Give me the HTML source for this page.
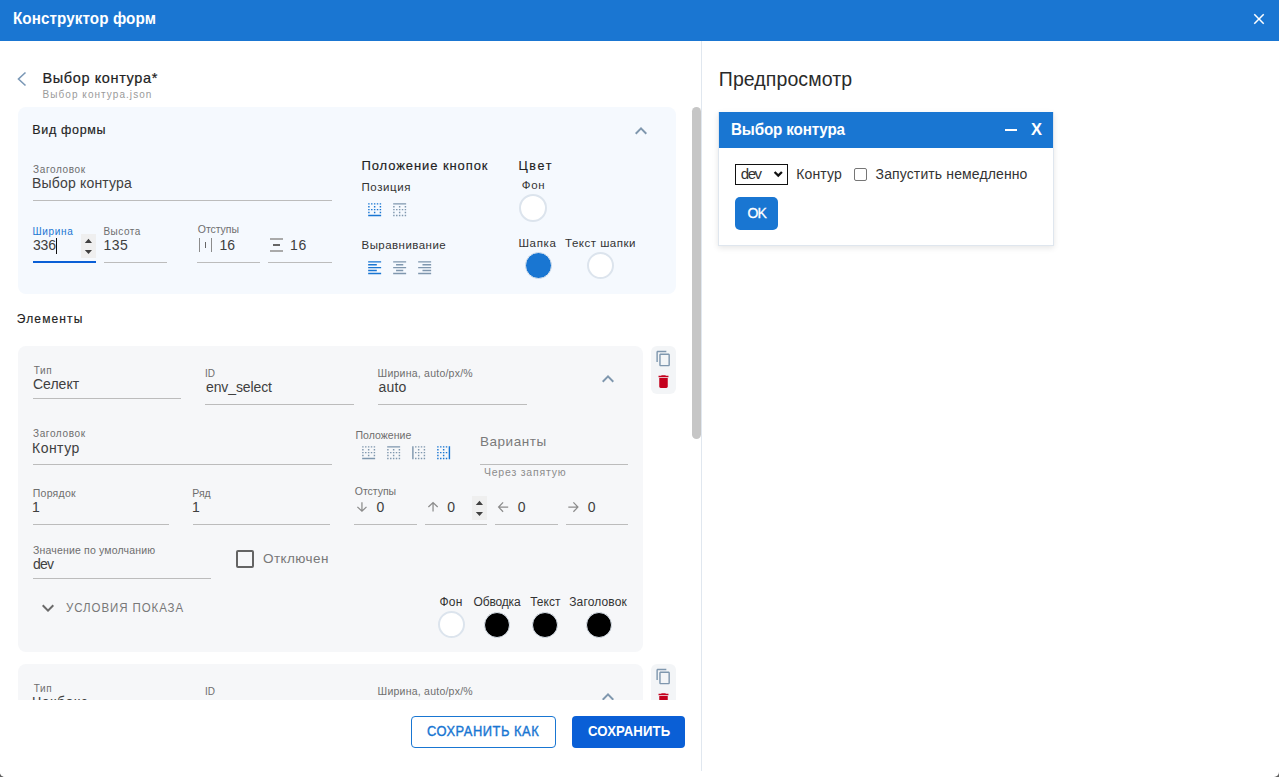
<!DOCTYPE html>
<html><head><meta charset="utf-8"><style>
html,body{margin:0;padding:0;width:1279px;height:777px;overflow:hidden;background:#fff;font-family:"Liberation Sans",sans-serif;}
</style></head><body>
<div id="clipL" style="position:absolute;left:0;top:0;width:1279px;height:777px;">
<div style='position:absolute;left:0px;top:0px;width:1279px;height:777px;background:#5f5f5f'></div>
<div style='position:absolute;left:0px;top:0px;width:1279px;height:777px;background:#fff;border-radius:0 0 5px 5px'></div>
<div style='position:absolute;left:0px;top:0px;width:1279px;height:41px;background:#1a76d2'></div>
<div style='position:absolute;left:701px;top:41px;width:1px;height:730px;background:#e0e7ef'></div>
<div style='position:absolute;left:18px;top:107px;width:658px;height:187px;background:#f5f9fe;border-radius:8px'></div>
<div style='position:absolute;left:18px;top:346px;width:625px;height:306px;background:#f6f7f9;border-radius:8px'></div>
<div style='position:absolute;left:651px;top:346px;width:25px;height:48px;background:#f3f5f7;border-radius:6px'></div>
<div style='position:absolute;left:18px;top:664px;width:625px;height:306px;background:#f6f7f9;border-radius:8px'></div>
<div style='position:absolute;left:651px;top:664px;width:25px;height:48px;background:#f3f5f7;border-radius:6px'></div>
<div style='position:absolute;left:718px;top:112px;width:334px;height:132px;background:#fff;border:1px solid #dfe6ee;box-shadow:0 2px 6px rgba(0,0,0,0.10)'></div>
<div style='position:absolute;left:33px;top:200px;width:299px;height:1px;background:#bcbcbc'></div>
<div style='position:absolute;left:33px;top:261px;width:63px;height:2px;background:#0a5fd6'></div>
<div style='position:absolute;left:104px;top:262px;width:63px;height:1px;background:#bcbcbc'></div>
<div style='position:absolute;left:197px;top:262px;width:63px;height:1px;background:#bcbcbc'></div>
<div style='position:absolute;left:268px;top:262px;width:64px;height:1px;background:#bcbcbc'></div>
<div style='position:absolute;left:33px;top:398px;width:148px;height:1px;background:#bcbcbc'></div>
<div style='position:absolute;left:205px;top:404px;width:149px;height:1px;background:#bcbcbc'></div>
<div style='position:absolute;left:378px;top:404px;width:149px;height:1px;background:#bcbcbc'></div>
<div style='position:absolute;left:33px;top:464px;width:299px;height:1px;background:#bcbcbc'></div>
<div style='position:absolute;left:480px;top:464px;width:148px;height:1px;background:#bcbcbc'></div>
<div style='position:absolute;left:33px;top:524px;width:136px;height:1px;background:#bcbcbc'></div>
<div style='position:absolute;left:193px;top:524px;width:137px;height:1px;background:#bcbcbc'></div>
<div style='position:absolute;left:354px;top:524px;width:63px;height:1px;background:#bcbcbc'></div>
<div style='position:absolute;left:425px;top:524px;width:62px;height:1px;background:#bcbcbc'></div>
<div style='position:absolute;left:495px;top:524px;width:63px;height:1px;background:#bcbcbc'></div>
<div style='position:absolute;left:566px;top:524px;width:62px;height:1px;background:#bcbcbc'></div>
<div style='position:absolute;left:33px;top:578px;width:178px;height:1px;background:#bcbcbc'></div>
<div style='position:absolute;left:33px;top:716px;width:148px;height:1px;background:#bcbcbc'></div>
<div style='position:absolute;left:205px;top:722px;width:149px;height:1px;background:#bcbcbc'></div>
<div style='position:absolute;left:378px;top:722px;width:149px;height:1px;background:#bcbcbc'></div>
<div style='position:absolute;left:692px;top:107px;width:9px;height:332px;background:#c6c6c6;border-radius:5px'></div>
<div style='position:absolute;left:719px;top:112px;width:334px;height:36px;background:#1976d2'></div>
<div style='position:absolute;left:81px;top:234px;width:15px;height:24px;background:#efefef'></div>
<div style='position:absolute;left:199px;top:238px;width:1px;height:14px;background:#8c8c8c'></div>
<div style='position:absolute;left:204.6px;top:242px;width:1.4px;height:6px;background:#666'></div>
<div style='position:absolute;left:211px;top:238px;width:1px;height:14px;background:#8c8c8c'></div>
<div style='position:absolute;left:270px;top:238.1px;width:13px;height:1.7px;background:#aaaaaa'></div>
<div style='position:absolute;left:273.1px;top:244px;width:6.8px;height:1.9px;background:#666'></div>
<div style='position:absolute;left:270px;top:250.1px;width:13px;height:1.7px;background:#aaaaaa'></div>
<div style='position:absolute;left:519px;top:194px;width:24px;height:24px;background:#fff;border:2px solid #dce4ed;border-radius:50%'></div>
<div style='position:absolute;left:524.5px;top:252px;width:25px;height:25px;background:#1976d2;border:1px solid #dce4ed;border-radius:50%'></div>
<div style='position:absolute;left:586.5px;top:252px;width:23px;height:23px;background:#fff;border:2px solid #dce4ed;border-radius:50%'></div>
<div style='position:absolute;left:472px;top:496px;width:15px;height:24px;background:#efefef'></div>
<div style='position:absolute;left:236px;top:550px;width:14px;height:14px;border:2px solid #646464;border-radius:2px'></div>
<div style='position:absolute;left:437.5px;top:611.3px;width:23px;height:23px;background:#fff;border:2px solid #dce4ed;border-radius:50%'></div>
<div style='position:absolute;left:484.2px;top:612.2px;width:24px;height:24px;background:#000;border:1px solid #dce4ed;border-radius:50%'></div>
<div style='position:absolute;left:532.1px;top:612.2px;width:24px;height:24px;background:#000;border:1px solid #dce4ed;border-radius:50%'></div>
<div style='position:absolute;left:585.7px;top:612.2px;width:24px;height:24px;background:#000;border:1px solid #dce4ed;border-radius:50%'></div>
<div style='position:absolute;left:1005.2px;top:128.5px;width:11.8px;height:2.8px;background:#fff'></div>
<div style='position:absolute;left:735px;top:164px;width:51px;height:19px;border:1px solid #111;background:#fff'></div>
<div style='position:absolute;left:854px;top:168.4px;width:11px;height:11px;background:#fff;border:1px solid #767676;border-radius:2px'></div>
<div style='position:absolute;left:735px;top:197px;width:43px;height:33px;background:#1976d2;border-radius:5px'></div>
<svg style='position:absolute;left:1250.05px;top:10.15px' width='18' height='18' viewBox='0 0 24 24'><path fill='#ffffff' d='M19 6.41L17.59 5 12 10.59 6.41 5 5 6.41 10.59 12 5 17.59 6.41 19 12 13.41 17.59 19 19 17.59 13.41 12z'/></svg>
<svg style='position:absolute;left:14px;top:70px' width='16' height='18' viewBox='0 0 16 18'><polyline points='11.5,2.5 4.5,9 11.5,15.5' fill='none' stroke='#7b98b6' stroke-width='1.6'/></svg>
<svg style='position:absolute;left:629px;top:118.7px' width='24' height='24' viewBox='0 0 24 24'><path fill='#7f97ae' d='M12 8l-6 6 1.41 1.41L12 10.83l4.59 4.58L18 14z'/></svg>
<svg style='position:absolute;left:81px;top:234px' width='15' height='24' viewBox='0 0 15 24'><path d='M3.8 9 L7.5 4.8 L11 9z M3.8 16 L7.5 20 L11 16z' fill='#404040'/></svg>
<svg style='position:absolute;left:365.84px;top:200.74px' width='17.3' height='17.3' viewBox='0 0 24 24'><path fill='#1976d2' d='M9 11H7v2h2v-2zm4 4h-2v2h2v-2zM9 3H7v2h2V3zm4 8h-2v2h2v-2zM5 3H3v2h2V3zm8 4h-2v2h2V7zm4 4h-2v2h2v-2zm-4-8h-2v2h2V3zm4 0h-2v2h2V3zm2 10h2v-2h-2v2zm0 4h2v-2h-2v2zM5 7H3v2h2V7zm14-4v2h2V3h-2zm0 6h2V7h-2v2zM5 11H3v2h2v-2zM3 21h18v-2H3v2zm2-6H3v2h2v-2z'/></svg>
<svg style='position:absolute;left:390.75px;top:200.74px' width='17.3' height='17.3' viewBox='0 0 24 24'><path fill='#7f97ae' d='M7 21h2v-2H7v2zm0-8h2v-2H7v2zm4 0h2v-2h-2v2zm0 8h2v-2h-2v2zm-8-4h2v-2H3v2zm0 4h2v-2H3v2zm0-8h2v-2H3v2zm0-4h2V7H3v2zm8 8h2v-2h-2v2zm8-8h2V7h-2v2zm0 4h2v-2h-2v2zM3 3v2h18V3H3zm16 14h2v-2h-2v2zm-4 4h2v-2h-2v2zM11 9h2V7h-2v2zm8 12h2v-2h-2v2zm-4-8h2v-2h-2v2z'/></svg>
<svg style='position:absolute;left:365.84px;top:258.84px' width='17.3' height='17.3' viewBox='0 0 24 24'><path fill='#1976d2' d='M15 15H3v2h12v-2zm0-8H3v2h12V7zM3 13h18v-2H3v2zm0 8h18v-2H3v2zM3 3v2h18V3H3z'/></svg>
<svg style='position:absolute;left:390.84px;top:258.84px' width='17.3' height='17.3' viewBox='0 0 24 24'><path fill='#7f97ae' d='M7 15v2h10v-2H7zm-4 6h18v-2H3v2zm0-8h18v-2H3v2zm4-6v2h10V7H7zM3 3v2h18V3H3z'/></svg>
<svg style='position:absolute;left:415.84px;top:258.84px' width='17.3' height='17.3' viewBox='0 0 24 24'><path fill='#7f97ae' d='M3 21h18v-2H3v2zm6-4h12v-2H9v2zm-6-4h18v-2H3v2zm6-4h12V7H9v2zM3 3v2h18V3H3z'/></svg>
<svg style='position:absolute;left:654.8px;top:350.1px' width='17' height='17' viewBox='0 0 24 24'><path fill='#7f97ae' d='M16 1H4c-1.1 0-2 .9-2 2v14h2V3h12V1zm3 4H8c-1.1 0-2 .9-2 2v14c0 1.1.9 2 2 2h11c1.1 0 2-.9 2-2V7c0-1.1-.9-2-2-2zm0 16H8V7h11v14z'/></svg>
<svg style='position:absolute;left:654.76px;top:373px' width='17' height='17' viewBox='0 0 24 24'><path fill='#c4001d' d='M6 19c0 1.1.9 2 2 2h8c1.1 0 2-.9 2-2V7H6v12zM19 4h-3.5l-1-1h-5l-1 1H5v2h14V4z'/></svg>
<svg style='position:absolute;left:596.3px;top:367.1px' width='24' height='24' viewBox='0 0 24 24'><path fill='#7f97ae' d='M12 8l-6 6 1.41 1.41L12 10.83l4.59 4.58L18 14z'/></svg>
<svg style='position:absolute;left:359.74px;top:443.94px' width='17.3' height='17.3' viewBox='0 0 24 24'><path fill='#7f97ae' d='M9 11H7v2h2v-2zm4 4h-2v2h2v-2zM9 3H7v2h2V3zm4 8h-2v2h2v-2zM5 3H3v2h2V3zm8 4h-2v2h2V7zm4 4h-2v2h2v-2zm-4-8h-2v2h2V3zm4 0h-2v2h2V3zm2 10h2v-2h-2v2zm0 4h2v-2h-2v2zM5 7H3v2h2V7zm14-4v2h2V3h-2zm0 6h2V7h-2v2zM5 11H3v2h2v-2zM3 21h18v-2H3v2zm2-6H3v2h2v-2z'/></svg>
<svg style='position:absolute;left:384.74px;top:443.94px' width='17.3' height='17.3' viewBox='0 0 24 24'><path fill='#7f97ae' d='M7 21h2v-2H7v2zm0-8h2v-2H7v2zm4 0h2v-2h-2v2zm0 8h2v-2h-2v2zm-8-4h2v-2H3v2zm0 4h2v-2H3v2zm0-8h2v-2H3v2zm0-4h2V7H3v2zm8 8h2v-2h-2v2zm8-8h2V7h-2v2zm0 4h2v-2h-2v2zM3 3v2h18V3H3zm16 14h2v-2h-2v2zm-4 4h2v-2h-2v2zM11 9h2V7h-2v2zm8 12h2v-2h-2v2zm-4-8h2v-2h-2v2z'/></svg>
<svg style='position:absolute;left:409.74px;top:443.94px' width='17.3' height='17.3' viewBox='0 0 24 24'><path fill='#7f97ae' d='M11 21h2v-2h-2v2zm0-4h2v-2h-2v2zm0-12h2V3h-2v2zm0 4h2V7h-2v2zm0 4h2v-2h-2v2zm-4 8h2v-2H7v2zM7 5h2V3H7v2zm0 8h2v-2H7v2zm-4 8h2V3H3v18zM19 9h2V7h-2v2zm-4 12h2v-2h-2v2zm4-4h2v-2h-2v2zm0-14v2h2V3h-2zm0 10h2v-2h-2v2zm0 8h2v-2h-2v2zm-4-8h2v-2h-2v2zm0-8h2V3h-2v2z'/></svg>
<svg style='position:absolute;left:434.6px;top:443.94px' width='17.3' height='17.3' viewBox='0 0 24 24'><path fill='#1976d2' d='M7 21h2v-2H7v2zM3 5h2V3H3v2zm4 0h2V3H7v2zm0 8h2v-2H7v2zm-4 8h2v-2H3v2zm8 0h2v-2h-2v2zm-8-8h2v-2H3v2zm0 4h2v-2H3v2zm0-8h2V7H3v2zm8 8h2v-2h-2v2zm4-4h2v-2h-2v2zm4-10v18h2V3h-2zm-4 18h2v-2h-2v2zm0-16h2V3h-2v2zm-4 8h2v-2h-2v2zm0-8h2V3h-2v2zm0 4h2V7h-2v2z'/></svg>
<svg style='position:absolute;left:355.3px;top:500px' width='13.899999999999977' height='13.800000000000011' viewBox='0 0 13.899999999999977 13.800000000000011'><path d='M6.949999999999989 2.3V11.100000000000012 M2.4 6.850000000000023L6.949999999999989 11.200000000000012L11.499999999999977 6.850000000000023' fill='none' stroke='#8c8c8c' stroke-width='1.25'/></svg>
<svg style='position:absolute;left:425.8px;top:500.3px' width='14.099999999999966' height='13.900000000000034' viewBox='0 0 14.099999999999966 13.900000000000034'><path d='M7.049999999999983 11.600000000000033V2.7 M2.4 7.049999999999983L7.049999999999983 2.6L11.699999999999966 7.049999999999983' fill='none' stroke='#8c8c8c' stroke-width='1.25'/></svg>
<svg style='position:absolute;left:472px;top:496px' width='15' height='24' viewBox='0 0 15 24'><path d='M3.8 9 L7.5 4.8 L11 9z M3.8 16 L7.5 20 L11 16z' fill='#404040'/></svg>
<svg style='position:absolute;left:496.1px;top:500px' width='14.5' height='14.200000000000045' viewBox='0 0 14.5 14.200000000000045'><path d='M2.7 7.100000000000023H12.2 M7.100000000000023 2.4L2.6 7.100000000000023L7.100000000000023 11.800000000000045' fill='none' stroke='#8c8c8c' stroke-width='1.25'/></svg>
<svg style='position:absolute;left:565.9px;top:500px' width='14.5' height='14.200000000000045' viewBox='0 0 14.5 14.200000000000045'><path d='M2.3 7.100000000000023H11.8 M7.399999999999977 2.4L11.9 7.100000000000023L7.399999999999977 11.800000000000045' fill='none' stroke='#8c8c8c' stroke-width='1.25'/></svg>
<svg style='position:absolute;left:36.2px;top:595.8px' width='24' height='24' viewBox='0 0 24 24'><path fill='#6a6a6a' d='M16.59 8.59L12 13.17 7.41 8.59 6 10l6 6 6-6z'/></svg>
<svg style='position:absolute;left:654.8px;top:668.1px' width='17' height='17' viewBox='0 0 24 24'><path fill='#7f97ae' d='M16 1H4c-1.1 0-2 .9-2 2v14h2V3h12V1zm3 4H8c-1.1 0-2 .9-2 2v14c0 1.1.9 2 2 2h11c1.1 0 2-.9 2-2V7c0-1.1-.9-2-2-2zm0 16H8V7h11v14z'/></svg>
<svg style='position:absolute;left:654.76px;top:691px' width='17' height='17' viewBox='0 0 24 24'><path fill='#c4001d' d='M6 19c0 1.1.9 2 2 2h8c1.1 0 2-.9 2-2V7H6v12zM19 4h-3.5l-1-1h-5l-1 1H5v2h14V4z'/></svg>
<svg style='position:absolute;left:596.3px;top:685.1px' width='24' height='24' viewBox='0 0 24 24'><path fill='#7f97ae' d='M12 8l-6 6 1.41 1.41L12 10.83l4.59 4.58L18 14z'/></svg>
<svg style='position:absolute;left:772.5px;top:168px' width='11' height='11' viewBox='0 0 11 11'><polyline points='1.6,4 5.25,7.6 8.9,4' fill='none' stroke='#111' stroke-width='2.3'/></svg>
<div style='position:absolute;left:56px;top:238px;width:1px;height:16px;background:#111'></div>
<div style='position:absolute;left:12.80px;top:10.75px;font-family:"Liberation Sans";font-size:16px;font-weight:700;line-height:16px;letter-spacing:0.095px;white-space:pre;color:#ffffff;transform:scaleX(0.950);transform-origin:0 0;'>Конструктор форм</div>
<div style='position:absolute;left:42.50px;top:71.10px;font-family:"Liberation Sans";font-size:14.5px;font-weight:400;line-height:14.5px;letter-spacing:0.615px;white-space:pre;color:#222222;-webkit-text-stroke:0.2px #222222;'>Выбор контура*</div>
<div style='position:absolute;left:42.50px;top:89.75px;font-family:"Liberation Sans";font-size:10px;font-weight:400;line-height:10px;letter-spacing:1.059px;white-space:pre;color:#9a9a9a;'>Выбор контура.json</div>
<div style='position:absolute;left:32.20px;top:123.80px;font-family:"Liberation Sans";font-size:12.5px;font-weight:400;line-height:12.5px;letter-spacing:0.688px;white-space:pre;color:#222222;-webkit-text-stroke:0.15px #222222;'>Вид формы</div>
<div style='position:absolute;left:33.10px;top:164.50px;font-family:"Liberation Sans";font-size:10px;font-weight:400;line-height:10px;letter-spacing:0.625px;white-space:pre;color:#6e6e6e;'>Заголовок</div>
<div style='position:absolute;left:32.10px;top:175.75px;font-family:"Liberation Sans";font-size:14px;font-weight:400;line-height:14px;letter-spacing:0.167px;white-space:pre;color:#404040;'>Выбор контура</div>
<div style='position:absolute;left:32.50px;top:227.00px;font-family:"Liberation Sans";font-size:10px;font-weight:400;line-height:10px;letter-spacing:0.680px;white-space:pre;color:#1976d2;'>Ширина</div>
<div style='position:absolute;left:33.00px;top:238.00px;font-family:"Liberation Sans";font-size:14px;font-weight:400;line-height:14px;letter-spacing:-0.200px;white-space:pre;color:#404040;'>336</div>
<div style='position:absolute;left:103.40px;top:227.00px;font-family:"Liberation Sans";font-size:10px;font-weight:400;line-height:10px;letter-spacing:0.520px;white-space:pre;color:#6e6e6e;'>Высота</div>
<div style='position:absolute;left:103.50px;top:238.00px;font-family:"Liberation Sans";font-size:14px;font-weight:400;line-height:14px;letter-spacing:0.500px;white-space:pre;color:#404040;'>135</div>
<div style='position:absolute;left:197.75px;top:224.10px;font-family:"Liberation Sans";font-size:10.5px;font-weight:400;line-height:10.5px;letter-spacing:-0.042px;white-space:pre;color:#6e6e6e;'>Отступы</div>
<div style='position:absolute;left:219.60px;top:237.75px;font-family:"Liberation Sans";font-size:14px;font-weight:400;line-height:14px;letter-spacing:-0.200px;white-space:pre;color:#404040;'>16</div>
<div style='position:absolute;left:290.00px;top:237.75px;font-family:"Liberation Sans";font-size:14px;font-weight:400;line-height:14px;letter-spacing:0.600px;white-space:pre;color:#404040;'>16</div>
<div style='position:absolute;left:361.50px;top:159.00px;font-family:"Liberation Sans";font-size:13px;font-weight:400;line-height:13px;letter-spacing:0.907px;white-space:pre;color:#222222;-webkit-text-stroke:0.15px #222222;'>Положение кнопок</div>
<div style='position:absolute;left:361.50px;top:181.90px;font-family:"Liberation Sans";font-size:11.5px;font-weight:400;line-height:11.5px;letter-spacing:0.583px;white-space:pre;color:#333;'>Позиция</div>
<div style='position:absolute;left:361.50px;top:240.00px;font-family:"Liberation Sans";font-size:11.5px;font-weight:400;line-height:11.5px;letter-spacing:0.455px;white-space:pre;color:#333;'>Выравнивание</div>
<div style='position:absolute;left:518.40px;top:159.50px;font-family:"Liberation Sans";font-size:12.5px;font-weight:400;line-height:12.5px;letter-spacing:1.667px;white-space:pre;color:#222222;-webkit-text-stroke:0.15px #222222;'>Цвет</div>
<div style='position:absolute;left:521.70px;top:179.70px;font-family:"Liberation Sans";font-size:11.5px;font-weight:400;line-height:11.5px;letter-spacing:0.750px;white-space:pre;color:#333;'>Фон</div>
<div style='position:absolute;left:518.40px;top:237.80px;font-family:"Liberation Sans";font-size:11.5px;font-weight:400;line-height:11.5px;letter-spacing:0.650px;white-space:pre;color:#333;'>Шапка</div>
<div style='position:absolute;left:565.00px;top:237.80px;font-family:"Liberation Sans";font-size:11.5px;font-weight:400;line-height:11.5px;letter-spacing:0.500px;white-space:pre;color:#333;'>Текст шапки</div>
<div style='position:absolute;left:16.80px;top:312.80px;font-family:"Liberation Sans";font-size:12px;font-weight:400;line-height:12px;letter-spacing:1.143px;white-space:pre;color:#222222;-webkit-text-stroke:0.15px #222222;'>Элементы</div>
<div style='position:absolute;left:33.70px;top:366.00px;font-family:"Liberation Sans";font-size:10px;font-weight:400;line-height:10px;letter-spacing:0.650px;white-space:pre;color:#6e6e6e;'>Тип</div>
<div style='position:absolute;left:33.00px;top:377.10px;font-family:"Liberation Sans";font-size:14px;font-weight:400;line-height:14px;letter-spacing:0.000px;white-space:pre;color:#404040;'>Селект</div>
<div style='position:absolute;left:205.00px;top:368.90px;font-family:"Liberation Sans";font-size:10px;font-weight:400;line-height:10px;letter-spacing:0.000px;white-space:pre;color:#6e6e6e;'>ID</div>
<div style='position:absolute;left:206.00px;top:379.70px;font-family:"Liberation Sans";font-size:14px;font-weight:400;line-height:14px;letter-spacing:-0.111px;white-space:pre;color:#404040;'>env_select</div>
<div style='position:absolute;left:377.60px;top:368.10px;font-family:"Liberation Sans";font-size:10.5px;font-weight:400;line-height:10.5px;letter-spacing:0.231px;white-space:pre;color:#6e6e6e;'>Ширина, auto/px/%</div>
<div style='position:absolute;left:378.60px;top:380.00px;font-family:"Liberation Sans";font-size:14px;font-weight:400;line-height:14px;letter-spacing:0.167px;white-space:pre;color:#404040;'>auto</div>
<div style='position:absolute;left:33.00px;top:429.30px;font-family:"Liberation Sans";font-size:10px;font-weight:400;line-height:10px;letter-spacing:0.625px;white-space:pre;color:#6e6e6e;'>Заголовок</div>
<div style='position:absolute;left:32.00px;top:440.50px;font-family:"Liberation Sans";font-size:14px;font-weight:400;line-height:14px;letter-spacing:0.480px;white-space:pre;color:#404040;'>Контур</div>
<div style='position:absolute;left:355.40px;top:429.80px;font-family:"Liberation Sans";font-size:10.5px;font-weight:400;line-height:10.5px;letter-spacing:0.050px;white-space:pre;color:#6e6e6e;'>Положение</div>
<div style='position:absolute;left:479.90px;top:434.90px;font-family:"Liberation Sans";font-size:13.5px;font-weight:400;line-height:13.5px;letter-spacing:0.571px;white-space:pre;color:#7a7a7a;'>Варианты</div>
<div style='position:absolute;left:483.90px;top:466.90px;font-family:"Liberation Sans";font-size:10.5px;font-weight:400;line-height:10.5px;letter-spacing:0.800px;white-space:pre;color:#8c8c8c;'>Через запятую</div>
<div style='position:absolute;left:32.75px;top:488.00px;font-family:"Liberation Sans";font-size:10.5px;font-weight:400;line-height:10.5px;letter-spacing:0.250px;white-space:pre;color:#6e6e6e;'>Порядок</div>
<div style='position:absolute;left:32.00px;top:500.00px;font-family:"Liberation Sans";font-size:14px;font-weight:400;line-height:14px;letter-spacing:0.000px;white-space:pre;color:#404040;'>1</div>
<div style='position:absolute;left:192.25px;top:488.00px;font-family:"Liberation Sans";font-size:10.5px;font-weight:400;line-height:10.5px;letter-spacing:0.000px;white-space:pre;color:#6e6e6e;'>Ряд</div>
<div style='position:absolute;left:192.00px;top:500.00px;font-family:"Liberation Sans";font-size:14px;font-weight:400;line-height:14px;letter-spacing:0.000px;white-space:pre;color:#404040;'>1</div>
<div style='position:absolute;left:354.75px;top:486.00px;font-family:"Liberation Sans";font-size:10.5px;font-weight:400;line-height:10.5px;letter-spacing:-0.025px;white-space:pre;color:#6e6e6e;'>Отступы</div>
<div style='position:absolute;left:376.50px;top:499.90px;font-family:"Liberation Sans";font-size:14px;font-weight:400;line-height:14px;letter-spacing:0.000px;white-space:pre;color:#404040;'>0</div>
<div style='position:absolute;left:447.25px;top:499.90px;font-family:"Liberation Sans";font-size:14px;font-weight:400;line-height:14px;letter-spacing:0.000px;white-space:pre;color:#404040;'>0</div>
<div style='position:absolute;left:517.75px;top:499.90px;font-family:"Liberation Sans";font-size:14px;font-weight:400;line-height:14px;letter-spacing:0.000px;white-space:pre;color:#404040;'>0</div>
<div style='position:absolute;left:587.75px;top:499.90px;font-family:"Liberation Sans";font-size:14px;font-weight:400;line-height:14px;letter-spacing:0.000px;white-space:pre;color:#404040;'>0</div>
<div style='position:absolute;left:33.00px;top:545.25px;font-family:"Liberation Sans";font-size:10.5px;font-weight:400;line-height:10.5px;letter-spacing:0.175px;white-space:pre;color:#6e6e6e;'>Значение по умолчанию</div>
<div style='position:absolute;left:33.00px;top:556.75px;font-family:"Liberation Sans";font-size:14px;font-weight:400;line-height:14px;letter-spacing:-0.750px;white-space:pre;color:#404040;'>dev</div>
<div style='position:absolute;left:263.00px;top:551.80px;font-family:"Liberation Sans";font-size:13.5px;font-weight:400;line-height:13.5px;letter-spacing:0.429px;white-space:pre;color:#787878;'>Отключен</div>
<div style='position:absolute;left:65.90px;top:601.90px;font-family:"Liberation Sans";font-size:12.5px;font-weight:400;line-height:12.5px;letter-spacing:0.995px;white-space:pre;color:#787878;transform:scaleX(0.920);transform-origin:0 0;'>УСЛОВИЯ ПОКАЗА</div>
<div style='position:absolute;left:439.50px;top:595.90px;font-family:"Liberation Sans";font-size:12px;font-weight:400;line-height:12px;letter-spacing:0.250px;white-space:pre;color:#333;'>Фон</div>
<div style='position:absolute;left:473.50px;top:595.90px;font-family:"Liberation Sans";font-size:12px;font-weight:400;line-height:12px;letter-spacing:-0.150px;white-space:pre;color:#333;'>Обводка</div>
<div style='position:absolute;left:530.20px;top:595.90px;font-family:"Liberation Sans";font-size:12px;font-weight:400;line-height:12px;letter-spacing:0.000px;white-space:pre;color:#333;'>Текст</div>
<div style='position:absolute;left:569.20px;top:595.90px;font-family:"Liberation Sans";font-size:12px;font-weight:400;line-height:12px;letter-spacing:0.150px;white-space:pre;color:#333;'>Заголовок</div>
<div style='position:absolute;left:33.70px;top:684.00px;font-family:"Liberation Sans";font-size:10px;font-weight:400;line-height:10px;letter-spacing:0.650px;white-space:pre;color:#6e6e6e;'>Тип</div>
<div style='position:absolute;left:32.00px;top:695.10px;font-family:"Liberation Sans";font-size:14px;font-weight:400;line-height:14px;letter-spacing:0.500px;white-space:pre;color:#404040;'>Чекбокс</div>
<div style='position:absolute;left:205.00px;top:686.90px;font-family:"Liberation Sans";font-size:10px;font-weight:400;line-height:10px;letter-spacing:0.000px;white-space:pre;color:#6e6e6e;'>ID</div>
<div style='position:absolute;left:377.60px;top:686.10px;font-family:"Liberation Sans";font-size:10.5px;font-weight:400;line-height:10.5px;letter-spacing:0.231px;white-space:pre;color:#6e6e6e;'>Ширина, auto/px/%</div>
<div style='position:absolute;left:718.80px;top:70.00px;font-family:"Liberation Sans";font-size:19.5px;font-weight:400;line-height:19.5px;letter-spacing:0.091px;white-space:pre;color:#2a2a2a;'>Предпросмотр</div>
<div style='position:absolute;left:730.55px;top:121.90px;font-family:"Liberation Sans";font-size:16px;font-weight:700;line-height:16px;letter-spacing:-0.154px;white-space:pre;color:#ffffff;transform:scaleX(0.950);transform-origin:0 0;'>Выбор контура</div>
<div style='position:absolute;left:1031.00px;top:121.20px;font-family:"Liberation Sans";font-size:16.5px;font-weight:700;line-height:16.5px;letter-spacing:0.000px;white-space:pre;color:#ffffff;'>X</div>
<div style='position:absolute;left:740.80px;top:165.80px;font-family:"Liberation Sans";font-size:15px;font-weight:400;line-height:15px;letter-spacing:-1.500px;white-space:pre;color:#333;'>dev</div>
<div style='position:absolute;left:796.20px;top:166.80px;font-family:"Liberation Sans";font-size:14px;font-weight:400;line-height:14px;letter-spacing:0.160px;white-space:pre;color:#333;'>Контур</div>
<div style='position:absolute;left:875.60px;top:166.60px;font-family:"Liberation Sans";font-size:14px;font-weight:400;line-height:14px;letter-spacing:0.121px;white-space:pre;color:#333;'>Запустить немедленно</div>
<div style='position:absolute;left:747.40px;top:205.90px;font-family:"Liberation Sans";font-size:14px;font-weight:400;line-height:14px;letter-spacing:-0.900px;white-space:pre;color:#ffffff;-webkit-text-stroke:0.3px #ffffff;'>OK</div>
<div style='position:absolute;left:0px;top:700px;width:701px;height:77px;background:#fff;border-radius:0 0 0 5px'></div>
<div style='position:absolute;left:411px;top:716px;width:143px;height:30px;border:1px solid #1976d2;border-radius:4px;background:#fff'></div>
<div style='position:absolute;left:572px;top:716px;width:113px;height:32px;background:#0a5fd6;border-radius:4px'></div>
<div style='position:absolute;left:427.20px;top:724.10px;font-family:"Liberation Sans";font-size:14px;font-weight:400;line-height:14px;letter-spacing:0.562px;white-space:pre;color:#1976d2;-webkit-text-stroke:0.4px #1976d2;transform:scaleX(0.920);transform-origin:0 0;'>СОХРАНИТЬ КАК</div>
<div style='position:absolute;left:587.50px;top:724.10px;font-family:"Liberation Sans";font-size:14px;font-weight:700;line-height:14px;letter-spacing:0.114px;white-space:pre;color:#ffffff;transform:scaleX(0.940);transform-origin:0 0;'>СОХРАНИТЬ</div>
</div></body></html>
